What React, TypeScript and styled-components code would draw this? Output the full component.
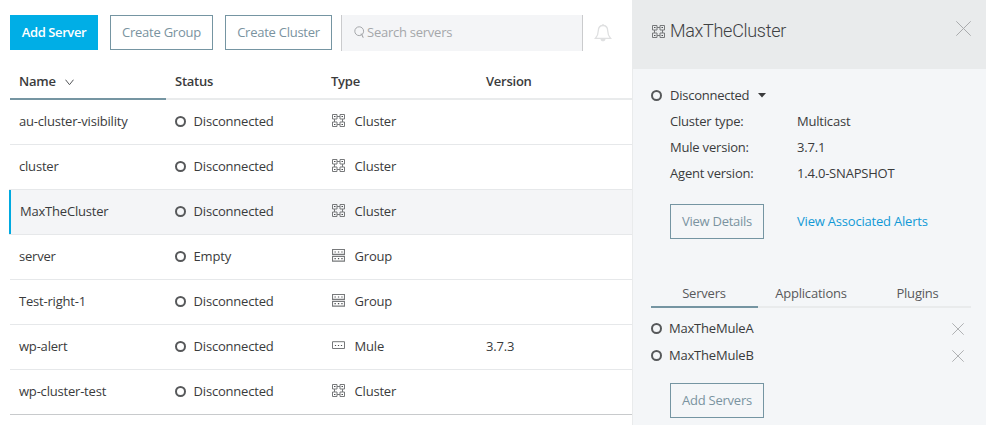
import React from 'react';
import styled, { createGlobalStyle } from 'styled-components';

const GlobalStyle = createGlobalStyle`
  * { box-sizing: border-box; }
  body {
    margin: 0;
    background: #fff;
    color: #3a3b3c;
    font: 13px/18px 'Open Sans', 'Noto Sans', sans-serif;
    letter-spacing: -0.2px;
    overflow: hidden;
  }
`;

const Page = styled.div`
  display: flex;
  width: 986px;
  height: 425px;
`;

const Main = styled.main`
  width: 632px;
  padding-top: 15px;
`;

const Toolbar = styled.div`
  display: flex;
  align-items: flex-start;
  height: 49px;
  padding-left: 10px;
`;

const Button = styled.button<{ $width: number; $primary?: boolean }>`
  flex: none;
  width: ${p => p.$width}px;
  height: 35px;
  padding: 0 0 1px;
  border: 1px solid ${p => (p.$primary ? '#00aee6' : '#7595a2')};
  background: ${p => (p.$primary ? '#00aee6' : 'transparent')};
  color: ${p => (p.$primary ? '#fff' : '#7a93a0')};
  font: inherit;
  font-weight: ${p => (p.$primary ? 600 : 400)};
  letter-spacing: ${p => (p.$primary ? -0.4 : -0.25)}px;
  white-space: nowrap;

  ${Toolbar} & { margin-right: 12px; }
`;

const Search = styled.label`
  display: flex;
  align-items: center;
  width: 242px;
  height: 36px;
  margin-left: -3px;
  padding: 0 12px 2px 12px;
  border: solid #cacbcd;
  border-width: 0 1px;
  background: #f4f5f7;

  input {
    flex: 1;
    min-width: 0;
    margin-left: 2px;
    padding: 0;
    border: 0;
    background: none;
    font: inherit;
    letter-spacing: -0.25px;
    outline: none;
  }
  input::placeholder { color: #a5a7aa; opacity: 1; }
`;

const BellBox = styled.div`
  display: flex;
  margin: 8px 0 0 11px;
`;

const columns = '156px 156px 155px 1fr';

const HeaderRow = styled.div`
  display: grid;
  grid-template-columns: ${columns};
  height: 36px;
  margin-left: 10px;
`;

const HeaderCell = styled.div<{ $sorted?: boolean }>`
  display: flex;
  gap: 9px;
  padding: 8px 0 0 9px;
  border-bottom: 2px solid ${p => (p.$sorted ? '#7595a2' : '#e9ebec')};
  font-weight: 600;
  letter-spacing: -0.25px;

  svg { margin-top: 7px; }
`;

const Rows = styled.div`
  display: flex;
  flex-direction: column;
`;

const Row = styled.div<{ $selected?: boolean }>`
  display: grid;
  grid-template-columns: ${columns};
  align-items: center;
  height: 45px;
  margin-left: 10px;
  padding-bottom: 2px;
  border-bottom: 1px solid #e6e8ea;
  ${p => p.$selected && `
    grid-template-columns: 157px 156px 155px 1fr;
    height: 46px;
    margin: -1px 0 0 9px;
    border-top: 1px solid #e6e8ea;
    box-shadow: inset 2px 0 #00a9e0;
    background: #f4f5f7;
  `}
  &:last-child { border-bottom-color: #c8cacc; }
`;

const Cell = styled.div<{ $inset?: number; $gap?: number }>`
  display: flex;
  align-items: center;
  gap: ${p => p.$gap ?? 0}px;
  padding-left: ${p => p.$inset ?? 9}px;
`;

const IconLift = styled.span`
  display: flex;
  margin-top: -2px;
`;

const Ring = styled.span`
  flex: none;
  width: 11px;
  height: 11px;
  border: 2px solid #56585a;
  border-radius: 50%;
`;

const Panel = styled.aside`
  width: 354px;
  border-left: 1px solid #e9ebec;
  background: #f4f6f8;
`;

const PanelHeader = styled.header`
  display: flex;
  height: 69px;
  padding: 21px 15px 0 19px;
  background: #e9ebec;

  > svg:first-child { margin-top: 4px; }
  > svg:last-child { margin-left: auto; }
`;

const Title = styled.h1`
  margin: -1px 0 0 5px;
  color: #3f4143;
  font: 300 18px/22px Roboto, sans-serif;
  letter-spacing: -0.3px;
`;

const StatusLine = styled.div`
  display: flex;
  align-items: center;
  height: 26px;
  margin-top: 13px;
  padding-left: 18px;

  span + span { margin: 0 9px 0 8px; letter-spacing: -0.25px; }
`;

const Facts = styled.dl`
  display: grid;
  grid-template-columns: 127px 1fr;
  grid-auto-rows: 26px;
  align-items: center;
  margin: 0;
  padding-left: 37px;

  dd { margin: 0; }
`;

const Actions = styled.div`
  display: flex;
  align-items: center;
  gap: 33px;
  padding: 18px 0 0 37px;
`;

const Link = styled.a`
  margin-bottom: 2px;
  color: #1199d6;
  text-decoration: none;
`;

const Tabs = styled.div`
  display: grid;
  grid-template-columns: 107px 107px 106px;
  margin: 45px 0 0 18px;
`;

const Tab = styled.div<{ $active?: boolean }>`
  height: 24px;
  padding-right: 1px;
  border-bottom: 2px solid ${p => (p.$active ? '#7595a2' : '#e9ebec')};
  color: #58595b;
  text-align: center;
`;

const Members = styled.div`
  padding: 7px 22px 14px 18px;
`;

const Member = styled.div`
  display: flex;
  align-items: center;
  height: 27px;

  span + span { flex: 1; margin: -1px 0 0 7px; }
`;

const Footer = styled.div`
  padding-left: 37px;
`;

type Kind = 'Cluster' | 'Group' | 'Mule';

function KindIcon({ kind }: { kind: Kind }) {
  return (
    <svg width="13" height="13" viewBox="0 0 13 13" fill="none" stroke="#77797b">
      {kind === 'Cluster' && (
        <>
          <path d="M.5 .5h4.500v4.500h-4.500zM8 .5h4.500v4.500h-4.500zM.5 8h4.500v4.500h-4.500zM8 8h4.500v4.500h-4.500z" />
          <path d="M5 2.500h3M5 10.500h3M2.500 5v3M10.500 5v3" />
          <path d="M2 2.500h1.500M9.500 2.500h1.500M2 10.500h1.500M9.500 10.500h1.500" stroke="#4f5153" strokeWidth="1.2" />
        </>
      )}
      {kind === 'Group' && (
        <>
          <path d="M.5 .5h12v4.900h-12zM.5 7.300h12v4.800h-12z" strokeWidth="1.150" />
          <path d="M2.500 3h1.300M5.900 3h1.300M9.300 3h1.300M2.500 9.600h1.300M5.900 9.600h1.300M9.300 9.600h1.300" stroke="#4f5153" strokeWidth="1.2" />
        </>
      )}
      {kind === 'Mule' && (
        <>
          <path d="M.5 2.700h12v6.800h-12z" />
          <path d="M2.900 6.500h1.200M5.900 6.500h1.200M8.900 6.500h1.200" stroke="#4f5153" strokeWidth="1.2" />
        </>
      )}
    </svg>
  );
}

function Cross({ size, color }: { size: number; color: string }) {
  return (
    <svg width={size} height={size} viewBox={`0 0 ${size} ${size}`} fill="none" stroke={color}>
      <path d={`M.3 .3L${size - 0.3} ${size - 0.3}M${size - 0.3} .3L.3 ${size - 0.3}`} />
    </svg>
  );
}

const servers: { name: string; status: string; kind: Kind; version?: string; selected?: boolean }[] = [
  { name: 'au-cluster-visibility', status: 'Disconnected', kind: 'Cluster' },
  { name: 'cluster', status: 'Disconnected', kind: 'Cluster' },
  { name: 'MaxTheCluster', status: 'Disconnected', kind: 'Cluster', selected: true },
  { name: 'server', status: 'Empty', kind: 'Group' },
  { name: 'Test-right-1', status: 'Disconnected', kind: 'Group' },
  { name: 'wp-alert', status: 'Disconnected', kind: 'Mule', version: '3.7.3' },
  { name: 'wp-cluster-test', status: 'Disconnected', kind: 'Cluster' },
];

export default function App() {
  return (
    <>
      <GlobalStyle />
      <Page>
        <Main>
          <Toolbar>
            <Button $width={88} $primary>Add Server</Button>
            <Button $width={103}>Create Group</Button>
            <Button $width={107}>Create Cluster</Button>
            <Search>
              <svg width="11" height="12" viewBox="0 0 11 12" fill="none" stroke="#a5a7aa">
                <circle cx="5.2" cy="5.2" r="4.4" />
                <path d="M6.500 8.200h1.500l.7 3h1" />
              </svg>
              <input placeholder="Search servers" />
            </Search>
            <BellBox>
              <svg width="18" height="20" viewBox="0 0 18 20" fill="none" stroke="#dfe0e1" strokeWidth="1.3">
                <path d="M9 2.500c-3.300 0-4.600 2.300-4.700 5.200-.1 3.500-.6 5.200-2.800 7.600h15c-2.200-2.400-2.700-4.100-2.800-7.600C13.600 4.800 12.300 2.500 9 2.500z" />
                <path d="M9 1v1.500" />
                <path d="M6.500 16h5c0 1.600-1.200 2.300-2.500 2.300s-2.500-.7-2.500-2.300z" fill="#dfe0e1" stroke="none" />
              </svg>
            </BellBox>
          </Toolbar>
          <HeaderRow>
            <HeaderCell $sorted>
              Name
              <svg width="9" height="7" viewBox="0 0 9 7" fill="none" stroke="#55575a">
                <path d="M.5 .7l4 5 4-5" />
              </svg>
            </HeaderCell>
            <HeaderCell>Status</HeaderCell>
            <HeaderCell>Type</HeaderCell>
            <HeaderCell>Version</HeaderCell>
          </HeaderRow>
          <Rows>
            {servers.map(s => (
              <Row key={s.name} $selected={s.selected}>
                <Cell $inset={s.selected ? 11 : 9}>{s.name}</Cell>
                <Cell $gap={7.6}><Ring />{s.status}</Cell>
                <Cell $inset={10} $gap={9.6}>
                  <IconLift><KindIcon kind={s.kind} /></IconLift>
                  {s.kind}
                </Cell>
                <Cell>{s.version}</Cell>
              </Row>
            ))}
          </Rows>
        </Main>
        <Panel>
          <PanelHeader>
            <KindIcon kind="Cluster" />
            <Title>MaxTheCluster</Title>
            <Cross size={15} color="#a9abad" />
          </PanelHeader>
          <StatusLine>
            <Ring />
            <span>Disconnected</span>
            <svg width="8" height="5" viewBox="0 0 8 5"><path d="M0 0h8L4 4.600z" fill="#3a3b3c" /></svg>
          </StatusLine>
          <Facts>
            <dt>Cluster type:</dt><dd>Multicast</dd>
            <dt>Mule version:</dt><dd>3.7.1</dd>
            <dt>Agent version:</dt><dd>1.4.0-SNAPSHOT</dd>
          </Facts>
          <Actions>
            <Button $width={94}>View Details</Button>
            <Link>View Associated Alerts</Link>
          </Actions>
          <Tabs>
            <Tab $active>Servers</Tab>
            <Tab>Applications</Tab>
            <Tab>Plugins</Tab>
          </Tabs>
          <Members>
            {['MaxTheMuleA', 'MaxTheMuleB'].map(name => (
              <Member key={name}>
                <Ring />
                <span>{name}</span>
                <Cross size={12} color="#b0b2b4" />
              </Member>
            ))}
          </Members>
          <Footer>
            <Button $width={94}>Add Servers</Button>
          </Footer>
        </Panel>
      </Page>
    </>
  );
}
